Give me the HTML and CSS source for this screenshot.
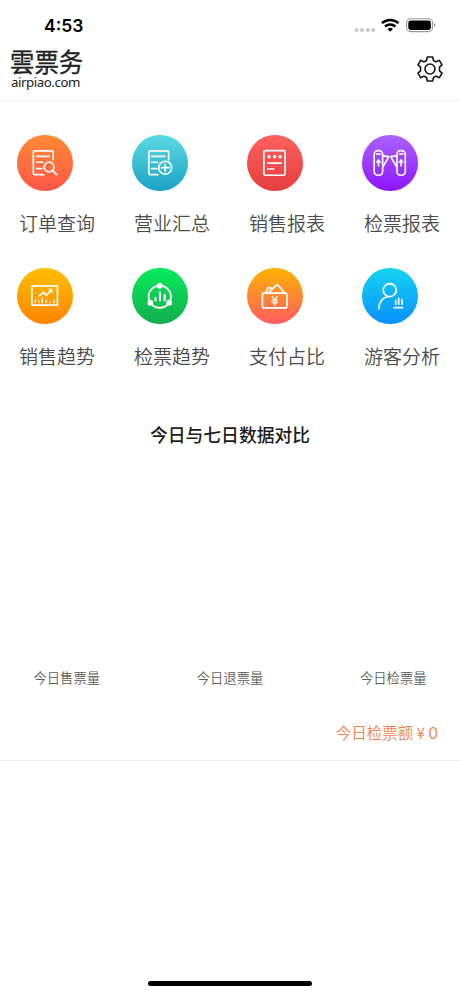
FILE: index.html
```html
<!DOCTYPE html>
<html lang="zh-CN">
<head>
<meta charset="utf-8">
<title>雲票务</title>
<link rel="stylesheet" href="styles.css">
</head>
<body>
<div class="screen">
  <div class="status">
    <span class="time">4:53</span>
    <svg class="status-icons" width="84" height="20" viewBox="0 0 84 20">
      <g fill="#c9c9c9"><circle cx="3.5" cy="14" r="2"/><circle cx="9" cy="14" r="2"/><circle cx="14.7" cy="14" r="2"/><circle cx="20.2" cy="14" r="2"/></g>
      <g fill="none" stroke="#000" stroke-width="2.5"><path d="M28.900 7.200a12.200 12.200 0 0 1 16.600 0"/><path d="M32 10.500a7.700 7.700 0 0 1 10.400 0"/></g>
      <path d="M34.500 13.100a4 4 0 0 1 5.400 0l-2.700 2.600z"/>
      <rect x="53.600" y="2.800" width="26" height="12.800" rx="4" fill="none" stroke="#999" stroke-width="1.100"/>
      <rect x="55.300" y="4.500" width="22.600" height="9.400" rx="2.400"/>
      <path d="M81 7.100q3 2 0 4z" fill="#999"/>
    </svg>
  </div>
  <header class="header">
    <div class="logo">
      <span class="logo-cn">雲票务</span>
      <span class="logo-en">airpiao.com</span>
    </div>
    <svg class="gear" width="26" height="28" viewBox="0 0 26 28" fill="none" stroke="#161616" stroke-width="1.600" stroke-linejoin="round">
      <path d="M10.300 2h5.400l.8 3.500 2.500 1.400 3.400-1.600 2.600 4.500-2.500 2.400v3.600l2.500 2.400-2.600 4.500-3.400-1.600-2.500 1.400-.8 3.500h-5.400l-.8-3.500L7 21.100l-3.400 1.600L1 18.200l2.500-2.400v-3.600L1 9.800l2.600-4.500L7 6.900l2.500-1.400z"/>
      <circle cx="13" cy="14" r="5"/>
    </svg>
  </header>
  <nav class="menu">
    <a class="item"><svg class="icon orange" viewBox="0 0 56 56">
      <path d="M36.500 25v-7.500q0-1.500-1.500-1.500H18q-1.500 0-1.500 1.500v21q0 1.500 1.500 1.500h9M20 21.500h12.500M20 27.500h6M20 34h5"/><circle cx="32.400" cy="32.300" r="4.900"/><path d="M36 36l4 4"/>
    </svg><span class="label">订单查询</span></a>
    <a class="item"><svg class="icon teal" viewBox="0 0 56 56">
      <path d="M37 25v-7.500q0-1.500-1.500-1.500H18.500q-1.500 0-1.500 1.500v21q0 1.500 1.500 1.500h7.500M20 21.500h13M20 27.500h6M20 34h5"/><circle cx="33.500" cy="33" r="6.500"/><path d="M29.800 33h7.400M33.500 29.300v7.400"/>
    </svg><span class="label">营业汇总</span></a>
    <a class="item"><svg class="icon red" viewBox="0 0 56 56">
      <rect x="17" y="15.800" width="21.300" height="24.800" rx="1.500"/><path d="M21 28.300h13.500M21 34.300h6"/><g class="fill"><circle cx="22.300" cy="22" r="1.700"/><circle cx="27.800" cy="22" r="1.700"/><circle cx="33.300" cy="22" r="1.700"/></g>
    </svg><span class="label">销售报表</span></a>
    <a class="item"><svg class="icon purple" viewBox="0 0 56 56">
      <rect x="12.300" y="15.800" width="8.500" height="24.800" rx="3.700"/><rect x="35.200" y="15.800" width="8.500" height="24.800" rx="3.700"/><path d="M15 19.300h3.200M38 19.300h3.200M16.600 25.500v5.500M39.400 25.500v5.500M21 21l6 .8-6 10.500M35 21l-6 .8 6 10.500"/><path class="fill" d="M13.600 28l3-4 3 4zM36.400 28l3-4 3 4z"/>
    </svg><span class="label">检票报表</span></a>
    <a class="item"><svg class="icon amber" viewBox="0 0 56 56">
      <rect x="15" y="18" width="25.800" height="19.500"/><path d="M22.500 28l4.500-3.500 2.500 3 5-5"/><path class="fill" d="M31.300 21h4.500v4.500z"/><path class="thin" d="M18.500 35v-3M22 35v-2M25.500 35v-5M29.500 35v-2M33.500 35v-1M37.500 35v-3"/>
    </svg><span class="label">销售趋势</span></a>
    <a class="item"><svg class="icon green" viewBox="0 0 56 56">
      <circle cx="28" cy="29" r="11.300"/><g class="fill"><circle cx="28" cy="17.800" r="2.900"/><circle cx="18.500" cy="35" r="2.900"/><circle cx="37.500" cy="35" r="2.900"/></g><path class="thick" d="M23.700 33.500v-4M28.200 33.500V23.800M32.900 33.500V26.500"/>
    </svg><span class="label">检票趋势</span></a>
    <a class="item"><svg class="icon coral" viewBox="0 0 56 56">
      <rect x="15.500" y="25.300" width="24.800" height="15" rx="2"/><path d="M18.500 25l3-5.500 4 1M21.500 25l9-8.500 7.500 8.500"/><path class="thin" d="M25.500 28.500l2.500 3.800 2.500-3.800M28 32.300v5M25.300 32.500h5.400M25.300 34.800h5.400"/>
    </svg><span class="label">支付占比</span></a>
    <a class="item"><svg class="icon blue" viewBox="0 0 56 56">
      <circle cx="28" cy="22.300" r="6.600"/><path d="M17 41c0-6 3.500-11.500 9-12"/><path d="M32.500 40h8.500M34 36.500V33M37 36.500v-6M40.300 36.500V32"/>
    </svg><span class="label">游客分析</span></a>
  </nav>
  <h1 class="title">今日与七日数据对比</h1>
  <div class="stats"><span>今日售票量</span><span>今日退票量</span><span>今日检票量</span></div>
  <div class="total">今日检票额<span class="yen">¥</span><span class="amount">0</span></div>
  <div class="home"></div>
</div>
</body>
</html>
```
FILE: styles.css
```css
* { box-sizing: border-box; }
body {
  margin: 0;
  background: #fff;
  font-family: "Noto Sans CJK SC", sans-serif;
  font-weight: 350;
}
.screen {
  width: 460px;
  height: 996px;
  display: flex;
  flex-direction: column;
  overflow: hidden;
}
.status {
  height: 44px;
  padding: 16px 23px 0 44px;
  display: flex;
  justify-content: space-between;
}
.time {
  font: 600 17.500px/20px Inter, sans-serif;
  color: #000;
}
.status-icons { display: block; }
.header {
  height: 57px;
  padding: 4px 17px 0 10px;
  display: flex;
  justify-content: space-between;
  border-bottom: 1px solid #ececec;
}
.logo { display: flex; flex-direction: column; color: #222; }
.logo-cn {
  font-size: 24.400px;
  font-weight: 400;
  line-height: 25px;
  transform: scaleY(1.06);
  -webkit-text-stroke: 0.300px #222;
}
.logo-en {
  margin: 1px 0 0 1px;
  font: 13.300px/16px "Noto Sans", sans-serif;
  letter-spacing: -0.450px;
}
.gear { margin-top: 7px; }
.menu {
  height: 266px;
  display: grid;
  grid-template-columns: repeat(4, 115px);
  grid-template-rows: 133px 133px;
}
.item {
  padding: 34px 0 0 17px;
  display: flex;
  flex-direction: column;
}
.icon {
  flex: none;
  width: 55.500px;
  height: 55.500px;
  border-radius: 50%;
  fill: none;
  stroke: #fff;
  stroke-width: 1.700;
  stroke-linecap: round;
  stroke-linejoin: round;
}
.icon .fill { fill: #fff; stroke: none; }
.icon .thin { stroke-width: 1.300; }
.icon .thick { stroke-width: 2.100; stroke-linecap: butt; }
.orange { background: linear-gradient(#ff8a33, #ff5648); }
.teal { background: linear-gradient(#5adbe3, #1ca2c5); }
.red { background: linear-gradient(#ff625e, #e43d3d); }
.purple { background: linear-gradient(#ab62ff, #8d16fb); }
.amber { background: linear-gradient(#ffc001, #ff8300); }
.green { background: linear-gradient(#06ec5b, #13ad4d); }
.coral { background: linear-gradient(#ffb300, #ff5c61); }
.blue { background: linear-gradient(#15d4ef, #0890ff); }
.label {
  margin: 18.500px 0 0 2px;
  font-size: 19px;
  line-height: 28px;
  color: #4c4c4c;
}
.title {
  margin: 53px 0 0;
  font-size: 17.800px;
  font-weight: 500;
  line-height: 28px;
  text-align: center;
  color: #1c1c1c;
}
.stats {
  margin-top: 220px;
  padding: 0 33.500px;
  display: flex;
  justify-content: space-between;
  font-size: 13.300px;
  line-height: 20px;
  color: #5c5c5c;
}
.total {
  height: 73px;
  padding: 32px 22px 0 0;
  border-bottom: 1px solid #ececec;
  text-align: right;
  font-size: 15.500px;
  line-height: 24px;
  color: #f08349;
}
.yen {
  display: inline-block;
  width: 15px;
  text-align: center;
}
.amount {
  font-family: Inter, sans-serif;
  font-weight: 400;
}
.home {
  width: 164px;
  height: 5px;
  margin: auto auto 10px;
  border-radius: 3px;
  background: #000;
}
```
